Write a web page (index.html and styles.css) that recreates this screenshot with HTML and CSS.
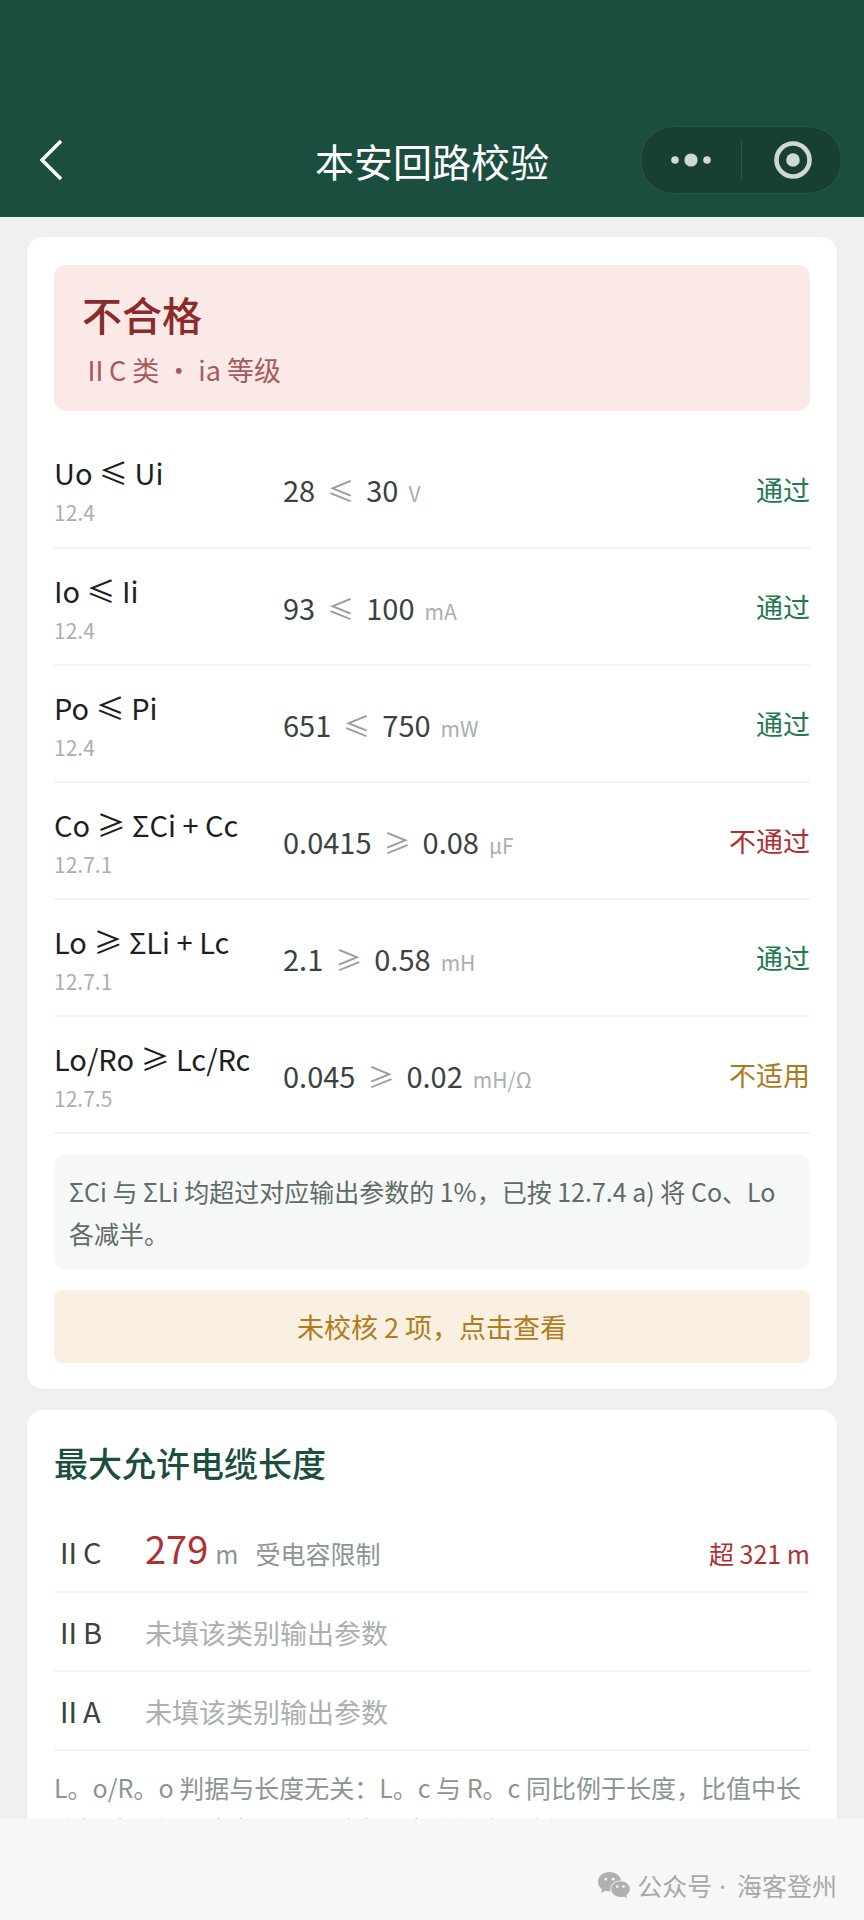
FILE: index.html
```
<!DOCTYPE html>
<html lang="zh-CN">
<head>
    <meta charset="UTF-8">
    <meta name="viewport" content="width=device-width, initial-scale=1.0">
    <title>本安回路校验</title>
    <link rel="stylesheet" href="styles.css">
</head>
<body>
    <header class="navbar">
        <button type="button" class="back-btn" aria-label="返回">
            <svg width="24" height="42" viewBox="0 0 24 42"><path d="M22 2 L3 21 L22 40" fill="none" stroke="#fff" stroke-width="3.5"/></svg>
        </button>
        <h1>本安回路校验</h1>
        <div class="capsule">
            <button type="button" aria-label="更多">
                <svg width="40" height="14" viewBox="0 0 40 14" fill="#cfdad6"><circle cx="4" cy="7" r="3.8"/><circle cx="20" cy="7" r="6.6"/><circle cx="36" cy="7" r="3.8"/></svg>
            </button>
            <button type="button" aria-label="关闭">
                <svg width="38" height="38" viewBox="0 0 38 38"><circle cx="19" cy="19" r="16.5" fill="none" stroke="#cfdad6" stroke-width="4.6"/><circle cx="19" cy="19" r="6.8" fill="#cfdad6"/></svg>
            </button>
        </div>
    </header>

    <main class="content">
        <section class="card">
            <div class="verdict">
                <h2>不合格</h2>
                <p>ⅡC 类 ・ ia 等级</p>
            </div>

            <table class="checks">
                <tr>
                    <th scope="row">Uo ≤ Ui<small>12.4</small></th>
                    <td class="calc">28<span class="op">≤</span>30<span class="unit">V</span></td>
                    <td class="result pass">通过</td>
                </tr>
                <tr>
                    <th scope="row">Io ≤ Ii<small>12.4</small></th>
                    <td class="calc">93<span class="op">≤</span>100<span class="unit">mA</span></td>
                    <td class="result pass">通过</td>
                </tr>
                <tr>
                    <th scope="row">Po ≤ Pi<small>12.4</small></th>
                    <td class="calc">651<span class="op">≤</span>750<span class="unit">mW</span></td>
                    <td class="result pass">通过</td>
                </tr>
                <tr>
                    <th scope="row">Co ≥ ΣCi + Cc<small>12.7.1</small></th>
                    <td class="calc">0.0415<span class="op">≥</span>0.08<span class="unit">μF</span></td>
                    <td class="result fail">不通过</td>
                </tr>
                <tr>
                    <th scope="row">Lo ≥ ΣLi + Lc<small>12.7.1</small></th>
                    <td class="calc">2.1<span class="op">≥</span>0.58<span class="unit">mH</span></td>
                    <td class="result pass">通过</td>
                </tr>
                <tr>
                    <th scope="row">Lo/Ro ≥ Lc/Rc<small>12.7.5</small></th>
                    <td class="calc">0.045<span class="op">≥</span>0.02<span class="unit">mH/Ω</span></td>
                    <td class="result na">不适用</td>
                </tr>
            </table>

            <p class="note">ΣCi 与 ΣLi 均超过对应输出参数的 1%，已按 12.7.4 a) 将 Co、Lo 各减半。</p>
            <button type="button" class="warn-btn">未校核 2 项，点击查看</button>
        </section>

        <section class="card">
            <h2 class="card-title">最大允许电缆长度</h2>
            <ul class="lengths">
                <li class="main-row">
                    <span class="group">ⅡC</span>
                    <span class="value">279</span>
                    <span class="metre">m</span>
                    <span class="reason">受电容限制</span>
                    <span class="over">超 321 m</span>
                </li>
                <li><span class="group">ⅡB</span><span class="empty">未填该类别输出参数</span></li>
                <li><span class="group">ⅡA</span><span class="empty">未填该类别输出参数</span></li>
            </ul>
            <p class="footnote">L。o/R。o 判据与长度无关：L。c 与 R。c 同比例于长度，比值中长度抵消，判据成立与否不受实际电缆长度限制。</p>
        </section>
    </main>

    <footer class="source">
        <svg width="32" height="27" viewBox="0 0 32 27">
            <path fill="#b0b0b0" d="M11.500 0C5 0 0 4.300 0 9.800c0 3 1.500 5.600 4 7.400L3.200 21l4-2.200c1.700.6 3.600.7 5.300.6-1.400-6.500 4-11.400 10.700-11C22.200 3.600 17.400 0 11.500 0z"/>
            <path fill="#b0b0b0" d="M22.500 9.200c-5.300 0-9.300 3.500-9.300 7.900s4 7.900 9.300 7.900c1.200 0 2.400-.2 3.500-.6l3 1.800-.7-3c2-1.500 3.500-3.700 3.500-6.100 0-4.400-4-7.900-9.300-7.900z"/>
            <g fill="#f7f7f7"><circle cx="7.800" cy="7" r="1.500"/><circle cx="15.200" cy="7" r="1.500"/><circle cx="19.300" cy="14.600" r="1.300"/><circle cx="25.500" cy="14.600" r="1.300"/></g>
        </svg>
        <span>公众号<span class="dot">·</span>海客登州</span>
    </footer>
</body>
</html>
```
FILE: styles.css
```
* {
    box-sizing: border-box;
}

body {
    display: flex;
    flex-direction: column;
    height: 100vh;
    margin: 0;
    background-color: #f0f1ef;
    font-family: "Noto Sans CJK SC", sans-serif;
    color: #1c1f1e;
}

h1, h2, p, ul {
    margin: 0;
    padding: 0;
}

button {
    padding: 0;
    border: none;
    background: none;
    font-family: inherit;
    cursor: pointer;
}

svg {
    display: block;
}

/* Top bar */
.navbar {
    display: grid;
    grid-template-columns: 1fr auto 1fr;
    align-items: center;
    flex-shrink: 0;
    padding: 126px 22px 23px;
    background-color: #1c4e3f;
}

.navbar h1 {
    font-size: 39px;
    line-height: 68px;
    font-weight: 400;
    color: #fff;
}

.back-btn {
    justify-self: start;
    margin-left: 17px;
}

.capsule {
    display: grid;
    grid-template-columns: 1fr 1fr;
    justify-self: end;
    width: 202px;
    height: 68px;
    border: 1px solid #28584a;
    border-radius: 34px;
    background-color: #183f32;
}

.capsule button {
    display: flex;
    align-items: center;
    justify-content: center;
}

.capsule button + button {
    padding-left: 4px;
    background: linear-gradient(#28584a, #28584a) left center / 1px 40px no-repeat;
}

/* Cards */
.content {
    display: flex;
    flex-direction: column;
    gap: 21px;
    flex: 1;
    min-height: 0;
    padding: 20px 27px 0;
    overflow: hidden;
}

.card {
    flex-shrink: 0;
    padding: 28px 27px 26px;
    border-radius: 16px;
    background-color: #fff;
    box-shadow: 0 2px 6px rgba(0, 0, 0, 0.02);
}

.verdict {
    padding: 24px 28px 20px;
    border-radius: 12px;
    background-color: #fbe9e8;
}

.verdict h2 {
    font-size: 40px;
    line-height: 50px;
    font-weight: 500;
    color: #8a2a2a;
}

.verdict p {
    margin-top: 10px;
    font-size: 27px;
    line-height: 42px;
    color: #a85a5a;
}

.checks {
    width: 100%;
    margin-top: 20px;
    border-collapse: collapse;
}

.checks tr {
    height: 117px;
    border-bottom: 2px solid #f1f2f2;
}

.checks th,
.checks td {
    padding: 0;
    font-weight: 400;
    text-align: left;
    white-space: nowrap;
}

.checks th {
    width: 229px;
    font-size: 29px;
    line-height: 46px;
}

.checks small {
    display: block;
    font-size: 21px;
    line-height: 34px;
    color: #a9b0ad;
}

.checks .calc {
    font-size: 29px;
    color: #3a4340;
}

.op {
    margin: 0 12px;
    font-size: 27px;
    color: #98a19d;
}

.unit {
    margin-left: 10px;
    font-size: 21px;
    color: #a9b0ad;
}

.checks .result {
    font-size: 27px;
    text-align: right;
}

.pass {
    color: #1f7a50;
}

.fail {
    color: #b03030;
}

.na {
    color: #ac7a1c;
}

.note {
    margin-top: 21px;
    padding: 15px;
    border-radius: 10px;
    background-color: #f6f8f7;
    font-size: 25px;
    line-height: 42px;
    color: #5f6b66;
}

.warn-btn {
    display: block;
    width: 100%;
    margin-top: 21px;
    border-radius: 8px;
    background-color: #faf0e1;
    font-size: 27px;
    line-height: 73px;
    color: #b07c1c;
}

.card-title {
    font-size: 34px;
    line-height: 50px;
    font-weight: 500;
    color: #1c4e3f;
}

.lengths {
    list-style-type: none;
    margin-top: 20px;
}

.lengths li {
    display: flex;
    align-items: baseline;
    padding: 17px 0 16px;
    border-bottom: 2px solid #f1f2f2;
    line-height: 43px;
}

.lengths .main-row {
    padding: 17px 0 15px;
    line-height: 46px;
}

.group {
    width: 91px;
    font-size: 29px;
    color: #3a4340;
}

.value {
    font-size: 38px;
    color: #b03030;
}

.metre {
    margin-left: 7px;
    font-size: 25px;
    color: #8b9691;
}

.reason {
    margin-left: 17px;
    font-size: 25px;
    color: #8b9691;
}

.over {
    margin-left: auto;
    font-size: 25px;
    color: #b03030;
}

.empty {
    font-size: 27px;
    color: #a9b0ad;
}

.footnote {
    margin-top: 15px;
    font-size: 25px;
    line-height: 42px;
    color: #8b9691;
}

/* Bottom strip */
.source {
    display: flex;
    align-items: center;
    justify-content: flex-end;
    gap: 7px;
    flex-shrink: 0;
    height: 101px;
    padding: 31px 27px 0 0;
    background-color: #f7f7f7;
    font-size: 25px;
    line-height: 36px;
    color: #a8a8a8;
}

.dot {
    margin: 0 11px 0 7px;
    font-family: "Noto Sans", sans-serif;
}
```
